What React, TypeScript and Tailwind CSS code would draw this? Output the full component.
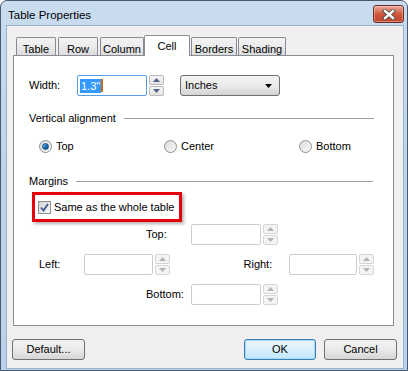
import React from 'react';

const font = { fontFamily: '"Liberation Sans", Arial, sans-serif' };

function Spinner({ enabled = false }: { enabled?: boolean }) {
  const box = enabled
    ? 'border-[#b9b9b9] bg-gradient-to-b from-[#f6f6f6] to-[#e4e4e4]'
    : 'border-[#d6d6d6] bg-[#f4f4f4]';
  const tri = enabled ? '#4d6387' : '#b4b4b4';
  return (
    <div className="flex flex-col justify-between w-[15px] h-[21px] ml-[2px]">
      <div className={`h-[10px] border rounded-[2px] flex items-center justify-center ${box}`}>
        <svg width="7" height="4" viewBox="0 0 7 4">
          <path d="M0 4 L3.5 0 L7 4 Z" fill={tri} />
        </svg>
      </div>
      <div className={`h-[10px] border rounded-[2px] flex items-center justify-center ${box}`}>
        <svg width="7" height="4" viewBox="0 0 7 4">
          <path d="M0 0 L7 0 L3.5 4 Z" fill={tri} />
        </svg>
      </div>
    </div>
  );
}

function EmptyInput() {
  return <div className="w-[70px] h-[21px] border border-[#cdcdcd] rounded-[2px] bg-white" />;
}

function Radio({ checked, label }: { checked?: boolean; label: string }) {
  return (
    <div className="flex items-center">
      <div className="w-[13px] h-[13px] rounded-full border border-[#8e8f8f] bg-gradient-to-br from-[#dcdcdc] to-[#fafafa] flex items-center justify-center">
        {checked && (
          <div className="w-[7px] h-[7px] rounded-full bg-gradient-to-br from-[#7cc4f0] via-[#1a74c0] to-[#0a4a8a] border border-[#1d4c7a]" />
        )}
      </div>
      <span className="ml-[4px]">{label}</span>
    </div>
  );
}

function Tab({ label, w, ml, selected }: { label: string; w: string; ml: string; selected?: boolean }) {
  return (
    <div
      className={`${w} ${ml} border border-b-0 border-[#898c95] flex justify-center ${
        selected
          ? 'h-[21px] -mb-px relative z-10 bg-white pt-[2px] rounded-t-[2px]'
          : 'h-[18px] bg-gradient-to-b from-[#f3f3f3] via-[#ebebeb] to-[#dcdcdc] pt-[3px] rounded-t-[2px]'
      }`}
    >
      {label}
    </div>
  );
}

function Button({ label, w, primary }: { label: string; w: string; primary?: boolean }) {
  return (
    <div
      className={`${w} h-[21px] rounded-[3px] border flex items-center justify-center ${
        primary
          ? 'border-[#3c7fb1] bg-gradient-to-b from-[#eaf6fd] via-[#d9f0fc] to-[#bee6fd] shadow-[inset_0_0_0_1px_#a6dbf5]'
          : 'border-[#707070] bg-gradient-to-b from-[#f2f2f2] via-[#ebebeb] to-[#d5d5d5]'
      }`}
    >
      {label}
    </div>
  );
}

export default function App() {
  return (
    <div
      className="w-[408px] h-[371px] border border-[#4b5a6b] rounded-t-[7px] bg-gradient-to-b from-[#c9dcf0] via-[#bcd3eb] to-[#b9d1ea] flex flex-col text-[11px] text-black"
      style={font}
    >
      <div className="h-[24px] flex items-start justify-between pl-[7px] pr-[3px]">
        <span className="text-[11.5px] mt-[7px] leading-[14px]">Table Properties</span>
        <div className="mt-[4px] w-[31px] h-[18px] rounded-[3px] border border-[#6e2b22] bg-gradient-to-b from-[#e9a99b] via-[#d0553c] to-[#c3442b] flex items-center justify-center shadow-[inset_0_0_0_1px_rgba(255,255,255,0.35)]">
          <svg width="14" height="11" viewBox="0 0 14 11">
            <path d="M3 2 L11 9 M11 2 L3 9" stroke="#4a4a4a" strokeWidth="4.2" strokeLinecap="square" />
            <path d="M3 2 L11 9 M11 2 L3 9" stroke="#ffffff" strokeWidth="2.4" strokeLinecap="square" />
          </svg>
        </div>
      </div>

      <div className="ml-[5px] mr-[3px] mb-[1px] flex-1 border border-[#9cb2cb] bg-[#f0f0f0] flex flex-col pt-[9px]">
        <div className="flex items-end h-[20px] pl-[9px]">
          <Tab label="Table" w="w-[40px]" ml="ml-0" />
          <Tab label="Row" w="w-[40px]" ml="ml-[2px]" />
          <Tab label="Column" w="w-[44px]" ml="ml-[2px]" />
          <Tab label="Cell" w="w-[46px]" ml="ml-0" selected />
          <Tab label="Borders" w="w-[46px]" ml="ml-[1px]" />
          <Tab label="Shading" w="w-[48px]" ml="ml-[1px]" />
        </div>

        <div className="ml-[6px] w-[381px] h-[271px] border border-[#898c95] bg-white flex flex-col pl-[15px] pr-[19px] pt-[19px]">
          <div className="flex items-center h-[21px]">
            <span className="w-[48px]">Width:</span>
            <div className="w-[70px] h-[21px] border border-[#569de5] rounded-[2px] bg-white flex items-center pl-[2px]">
              <span className="bg-[#3399ff] text-white leading-[14px] px-px">1.3"</span>
              <span className="w-[2px] h-[13px] bg-[#cc6a1a]" />
            </div>
            <Spinner enabled />
            <div className="ml-[16px] w-[100px] h-[21px] rounded-[3px] border border-[#707070] bg-gradient-to-b from-[#f2f2f2] via-[#ebebeb] to-[#d3d3d3] flex items-center justify-between pl-[4px] pr-[7px]">
              <span>Inches</span>
              <svg width="7" height="4" viewBox="0 0 7 4">
                <path d="M0 0 L7 0 L3.5 4 Z" fill="#000" />
              </svg>
            </div>
          </div>

          <div className="flex items-center h-[14px] mt-[15px]">
            <span>Vertical alignment</span>
            <div className="flex-1 h-px bg-[#a0a0a0] ml-[8px]" />
          </div>

          <div className="flex items-center h-[13px] mt-[15px] pl-[10px]">
            <div className="w-[125px]">
              <Radio checked label="Top" />
            </div>
            <div className="w-[135px]">
              <Radio label="Center" />
            </div>
            <Radio label="Bottom" />
          </div>

          <div className="flex items-center h-[14px] mt-[21px]">
            <span>Margins</span>
            <div className="flex-1 h-px bg-[#a0a0a0] ml-[8px] mr-px" />
          </div>

          <div className="mt-[4px] ml-[3px] w-[150px] h-[30px] border-[3px] border-[#e8000b] shadow-[2px_2px_3px_rgba(0,0,0,0.3)] flex items-center pl-[3px]">
            <div className="w-[13px] h-[13px] border border-[#8e8f8f] bg-gradient-to-br from-[#d6d6d6] to-[#f7f7f7] flex items-center justify-center">
              <svg width="9" height="9" viewBox="0 0 9 9">
                <path d="M1 4.5 L3.5 7.5 L8 1" stroke="#3e5890" strokeWidth="1.8" fill="none" />
              </svg>
            </div>
            <span className="ml-[3px]">Same as the whole table</span>
          </div>

          <div className="flex items-center h-[21px] mt-[2px] ml-[117px]">
            <span className="w-[45px]">Top:</span>
            <EmptyInput />
            <Spinner />
          </div>

          <div className="flex items-center h-[21px] mt-[9px] ml-[10px]">
            <span className="w-[46px]">Left:</span>
            <EmptyInput />
            <Spinner />
            <span className="w-[46px] ml-[74px]">Right:</span>
            <EmptyInput />
            <Spinner />
          </div>

          <div className="flex items-center h-[21px] mt-[9px] ml-[117px]">
            <span className="w-[45px]">Bottom:</span>
            <EmptyInput />
            <Spinner />
          </div>
        </div>

        <div className="flex items-center mt-[13px] pl-[5px] pr-[6px]">
          <Button label="Default..." w="w-[73px]" />
          <div className="flex-1" />
          <Button label="OK" w="w-[72px]" primary />
          <div className="w-[8px]" />
          <Button label="Cancel" w="w-[73px]" />
        </div>
      </div>
    </div>
  );
}
